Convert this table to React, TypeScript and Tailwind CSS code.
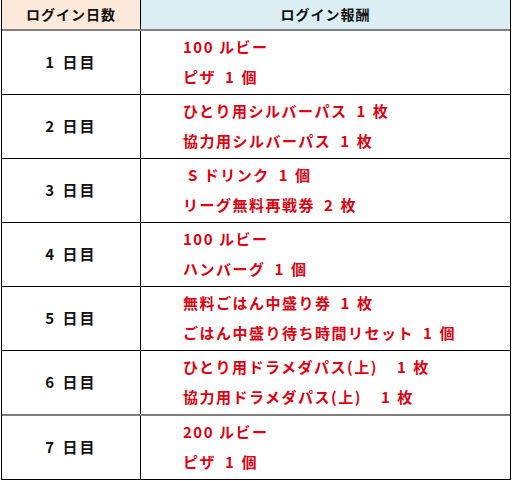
import React from "react";

type Item = { t: string; n?: string; u?: string; g?: boolean };

const rows: { day: string; items: Item[] }[] = [
  { day: "1 日目", items: [{ t: "100 ルビー" }, { t: "ピザ", n: "1", u: "個" }] },
  { day: "2 日目", items: [{ t: "ひとり用シルバーパス", n: "1", u: "枚" }, { t: "協力用シルバーパス", n: "1", u: "枚" }] },
  { day: "3 日目", items: [{ t: "\u00a0S ドリンク", n: "1", u: "個" }, { t: "リーグ無料再戦券", n: "2", u: "枚" }] },
  { day: "4 日目", items: [{ t: "100 ルビー" }, { t: "ハンバーグ", n: "1", u: "個" }] },
  { day: "5 日目", items: [{ t: "無料ごはん中盛り券", n: "1", u: "枚" }, { t: "ごはん中盛り待ち時間リセット", n: "1", u: "個" }] },
  { day: "6 日目", items: [{ t: "ひとり用ドラメダパス(上)", n: "1", u: "枚", g: true }, { t: "協力用ドラメダパス(上)", n: "1", u: "枚", g: true }] },
  { day: "7 日目", items: [{ t: "200 ルビー" }, { t: "ピザ", n: "1", u: "個" }] },
];

export default function App() {
  return (
    <div
      className="w-[512px] h-[481px] bg-white overflow-hidden"
      style={{ fontFamily: '"Noto Sans CJK JP", "Noto Sans", sans-serif' }}
    >
      <div className="ml-px w-[510px] h-[480px] border-l border-r border-b border-black flex flex-col">
        <div className="flex h-[31px] border-b-2 border-[#7f7f7f]">
          <div className="w-[139px] bg-[#fde9d9] flex items-center justify-center text-[14px] font-bold text-[#111] tracking-[1px] border-r border-black">
            ログイン日数
          </div>
          <div className="flex-1 bg-[#daeef3] flex items-center justify-center text-[14px] font-bold text-[#111] tracking-[1px]">
            ログイン報酬
          </div>
        </div>
        {rows.map((r, i) => (
          <div
            key={i}
            className={`flex flex-1 ${
              i === rows.length - 1
                ? ""
                : i === 5
                ? "border-b-2 border-[#7f7f7f]"
                : "border-b border-black"
            }`}
          >
            <div className="w-[139px] flex items-center justify-center text-[15px] font-bold text-[#111] tracking-[2px] [word-spacing:1px] border-r border-black">
              {r.day}
            </div>
            <div className="flex-1 flex flex-col justify-center pl-[42px] pb-px text-[15px] font-bold text-[#e00010] leading-[30px] tracking-[1.5px]">
              {r.items.map((it, j) => (
                <div key={j} className="flex whitespace-pre">
                  <span>{it.t}</span>
                  {it.n && (
                    <span className={it.g ? "ml-[19px]" : "ml-[9px]"}>{it.n}</span>
                  )}
                  {it.u && <span className="ml-[6px]">{it.u}</span>}
                </div>
              ))}
            </div>
          </div>
        ))}
      </div>
    </div>
  );
}
